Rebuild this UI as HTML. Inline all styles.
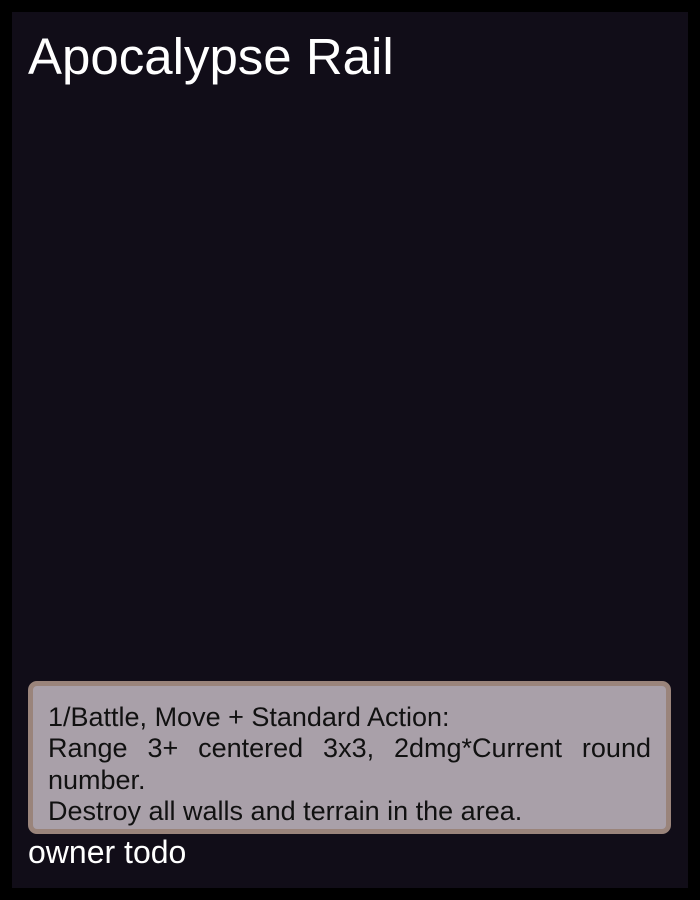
<!DOCTYPE html>
<html><head><meta charset="utf-8"><style>
html,body{margin:0;padding:0;background:#000;}
body{width:700px;height:900px;position:relative;overflow:hidden;font-family:"Liberation Sans",sans-serif;}
.card{position:absolute;left:12px;top:12px;width:676px;height:876px;background:#110d18;}
.title{position:absolute;left:28px;top:28px;font-size:51px;color:#fff;line-height:58px;white-space:nowrap;}
.box{position:absolute;left:28px;top:681px;width:633px;height:143px;border:5px solid #9a847b;border-radius:9px;background:#a9a0a9;box-sizing:content-box;}
.txt{position:absolute;left:15px;top:16px;width:603px;font-size:27px;line-height:31.3px;color:#111;text-align:justify;white-space:normal;}
.owner{position:absolute;left:28px;top:835px;font-size:32px;color:#fff;line-height:34px;}
</style></head><body>
<div class="card"></div>
<div class="title">Apocalypse Rail</div>
<div class="box"><div class="txt">1/Battle, Move + Standard Action:<br>Range 3+ centered 3x3, 2dmg*Current round number.<br>Destroy all walls and terrain in the area.</div></div>
<div class="owner">owner todo</div>
</body></html>
